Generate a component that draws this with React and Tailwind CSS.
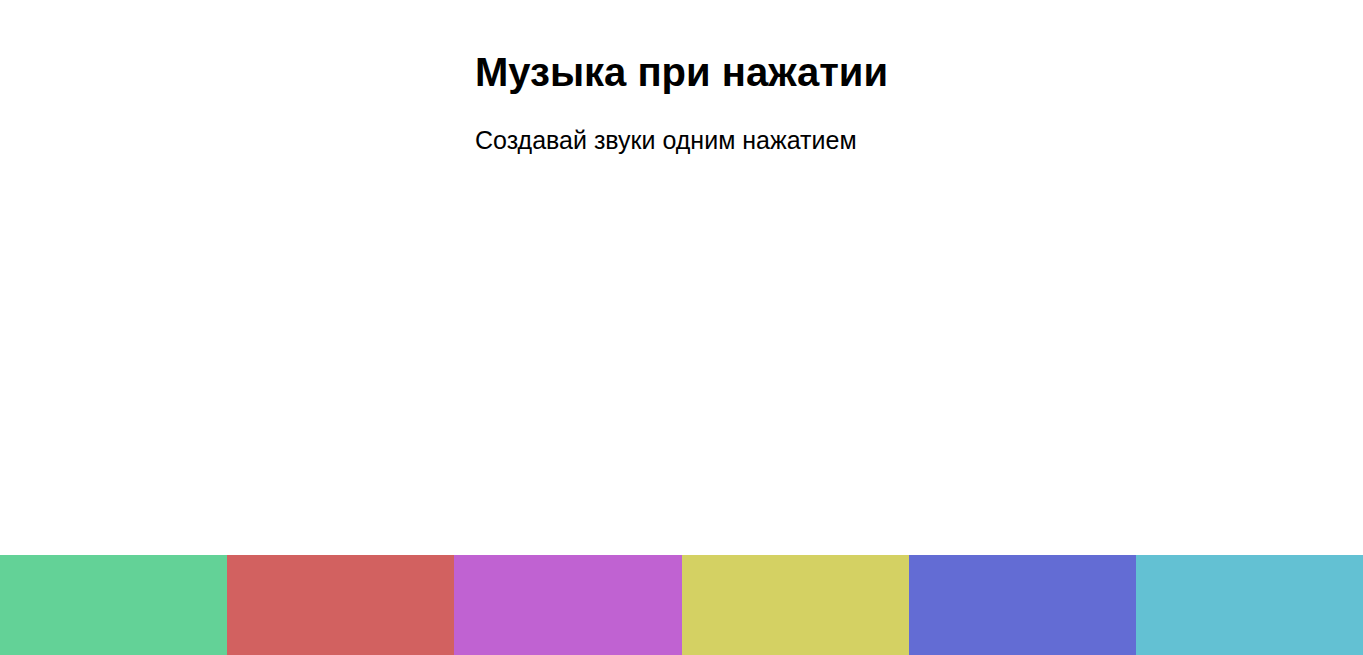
const pads = [
  { name: "green", color: "bg-[#63d297]" },
  { name: "red", color: "bg-[#d26160]" },
  { name: "purple", color: "bg-[#c062d2]" },
  { name: "yellow", color: "bg-[#d4d163]" },
  { name: "blue", color: "bg-[#636cd4]" },
  { name: "cyan", color: "bg-[#63c1d3]" },
];

export default function App() {
  return (
    <div className="h-screen flex flex-col bg-white text-black font-['Liberation_Sans',Arial,sans-serif]">
      <header className="w-fit mx-auto mt-[49px]">
        <h1 className="text-[40px] font-bold leading-[1.15]">Музыка при нажатии</h1>
        <p className="mt-[31px] text-[25px] leading-[1.15]">Создавай звуки одним нажатием</p>
      </header>
      <div className="mt-auto h-[100px] grid grid-cols-6">
        {pads.map((p) => (
          <div key={p.name} className={p.color} />
        ))}
      </div>
    </div>
  );
}
